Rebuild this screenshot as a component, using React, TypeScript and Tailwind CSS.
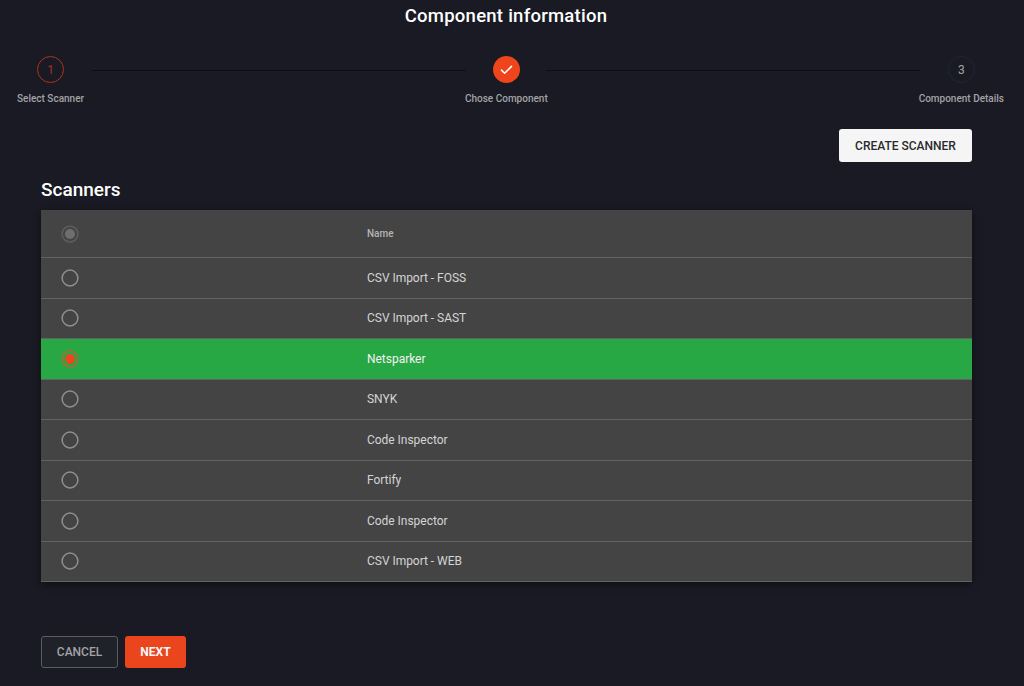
import React from "react";

const rows = ["CSV Import - FOSS", "CSV Import - SAST", "Netsparker", "SNYK", "Code Inspector", "Fortify", "Code Inspector", "CSV Import - WEB"];

function Radio({ state }: { state: "header" | "off" | "on" }) {
  return (
    <svg width="18" height="18" viewBox="0 0 18 18" fill="none" className="block">
      {state === "header" && (
        <>
          <circle cx="9" cy="9" r="7.9" stroke="#5c5c5c" strokeWidth="1.6" />
          <circle cx="9" cy="9" r="5" fill="#6e6e6e" />
        </>
      )}
      {state === "off" && <circle cx="9" cy="9" r="7.9" stroke="#8f8f8f" strokeWidth="1.5" />}
      {state === "on" && (
        <>
          <circle cx="9" cy="9" r="7.9" stroke="#c9602f" strokeWidth="1.3" />
          <circle cx="9" cy="9" r="5" fill="#f0441f" />
        </>
      )}
    </svg>
  );
}

export default function App() {
  return (
    <div className="h-[686px] w-[1024px] overflow-hidden bg-[#191a23] font-['Roboto',sans-serif]">
      <h1 className="pt-[4px] pr-[12px] text-center text-[18.5px] leading-[24px] font-medium tracking-[0.25px] text-white">Component information</h1>

      <div className="mt-[28px] flex items-start pl-[17px] pr-[20px]">
        <div className="flex flex-col items-center">
          <span className="flex h-[27px] w-[27px] items-center justify-center rounded-full border border-[#ad351b] text-[12px] text-[#a5321a]">1</span>
          <span className="mt-[10px] whitespace-nowrap text-[10px] leading-[12px] font-medium text-[#a3a3a6]">Select Scanner</span>
        </div>
        <div className="mt-[13.5px] ml-[8px] mr-[-1px] h-[1.5px] flex-1 bg-[#0d0e13]" />
        <div className="flex flex-col items-center">
          <span className="flex h-[27px] w-[27px] items-center justify-center rounded-full bg-[#ee451d]">
            <svg width="15" height="15" viewBox="0 0 24 24" fill="none" stroke="#fff" strokeWidth="2.4" strokeLinecap="round" strokeLinejoin="round">
              <path d="M4 13l5 5L20 7" />
            </svg>
          </span>
          <span className="mt-[10px] whitespace-nowrap text-[10px] leading-[12px] font-medium text-[#a3a3a6]">Chose Component</span>
        </div>
        <div className="mt-[13.5px] ml-[-2px] mr-[-1px] h-[1.5px] flex-1 bg-[#0d0e13]" />
        <div className="flex flex-col items-center">
          <span className="flex h-[27px] w-[27px] items-center justify-center rounded-full border border-[#24262f] text-[12px] text-[#a3a3a6]">3</span>
          <span className="mt-[10px] whitespace-nowrap text-[10px] leading-[12px] font-medium text-[#a3a3a6]">Component Details</span>
        </div>
      </div>

      <div className="mx-[41px] mr-[52px]">
        <div className="mt-[24px] flex justify-end">
          <button className="h-[33px] w-[133px] rounded-[3px] bg-[#f5f5f5] text-[12px] font-medium text-[#2a2a2e]">CREATE SCANNER</button>
        </div>

        <h2 className="mt-[16px] text-[19px] leading-[24px] font-medium text-white">Scanners</h2>

        <div className="mt-[8px] bg-[#444444] shadow-[0_2px_8px_rgba(0,0,0,0.45)]">
          <div className="flex h-[48px] items-center border-b border-[#626262]">
            <div className="w-[326px] pl-[20px]"><Radio state="header" /></div>
            <span className="text-[10px] font-medium text-[#b5b5b5]">Name</span>
          </div>
          {rows.map((name, i) => (
            <div key={i} className={`flex h-[40.5px] items-center border-b border-[#626262] ${i === 2 ? "bg-[#28a745]" : ""}`}>
              <div className="w-[326px] pl-[20px]"><Radio state={i === 2 ? "on" : "off"} /></div>
              <span className={`text-[12px] tracking-[-0.03px] ${i === 2 ? "text-[#f2f2f2]" : "text-[#d4d4d4]"}`}>{name}</span>
            </div>
          ))}
        </div>

        <div className="mt-[54px] flex gap-[7px]">
          <button className="h-[32px] w-[77px] rounded-[3px] border border-[#5a5c64] bg-[#20222a] text-[12px] font-medium text-[#a3a3a6]">CANCEL</button>
          <button className="h-[32px] w-[61px] rounded-[3px] bg-[#ea451c] text-[12px] font-bold text-[#f7f7f7]">NEXT</button>
        </div>
      </div>
    </div>
  );
}
